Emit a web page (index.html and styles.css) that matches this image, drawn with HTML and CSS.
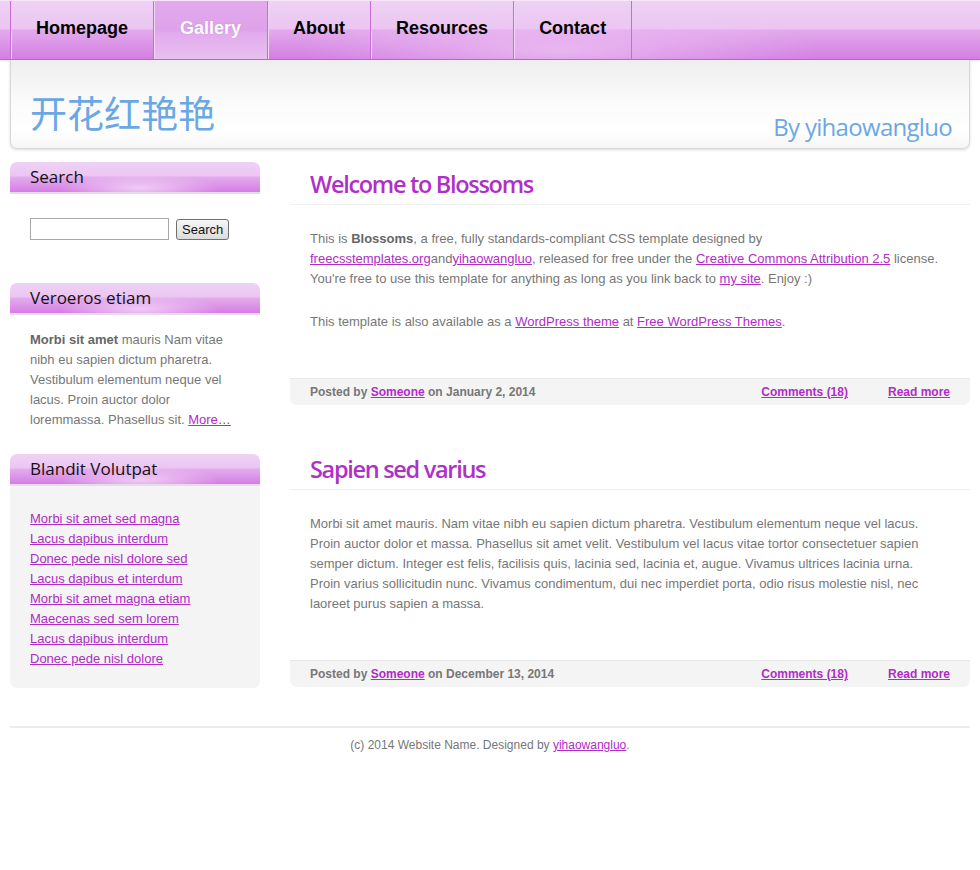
FILE: index.html
```html
<!DOCTYPE html>
<html lang="zh">
<head>
<meta charset="utf-8">
<title>Blossoms</title>
<link rel="stylesheet" href="styles.css">
</head>
<body>
<div class="nav">
  <ul class="menu">
    <li><a href="#">Homepage</a></li>
    <li class="active"><a href="#">Gallery</a></li>
    <li><a href="#">About</a></li>
    <li><a href="#">Resources</a></li>
    <li class="last"><a href="#">Contact</a></li>
  </ul>
</div>
<div class="header">
  <h1 class="logo">开花红艳艳</h1>
  <p class="byline">By yihaowangluo</p>
</div>
<div class="page">
  <div class="sidebar">
    <div class="box box-search">
      <h2 class="box-title">Search</h2>
      <div class="box-body search">
        <input class="search-input" type="text">
        <button class="search-btn" type="button">Search</button>
      </div>
    </div>
    <div class="box">
      <h2 class="box-title">Veroeros etiam</h2>
      <div class="box-body text">
        <strong>Morbi sit amet</strong> mauris Nam vitae nibh eu sapien dictum pharetra. Vestibulum elementum neque vel lacus. Proin auctor dolor loremmassa. Phasellus sit. <a href="#">More…</a>
      </div>
    </div>
    <div class="box">
      <h2 class="box-title">Blandit Volutpat</h2>
      <ul class="box-body links">
        <li><a href="#">Morbi sit amet sed magna</a></li>
        <li><a href="#">Lacus dapibus interdum</a></li>
        <li><a href="#">Donec pede nisl dolore sed</a></li>
        <li><a href="#">Lacus dapibus et interdum</a></li>
        <li><a href="#">Morbi sit amet magna etiam</a></li>
        <li><a href="#">Maecenas sed sem lorem</a></li>
        <li><a href="#">Lacus dapibus interdum</a></li>
        <li><a href="#">Donec pede nisl dolore</a></li>
      </ul>
    </div>
  </div>
  <div class="main">
    <div class="post">
      <h2 class="post-title">Welcome to Blossoms</h2>
      <div class="entry">
        <p>This is <strong>Blossoms</strong>, a free, fully standards-compliant CSS template designed by <a href="#">freecsstemplates.org</a>and<a href="#">yihaowangluo</a>, released for free under the <a href="#">Creative Commons Attribution 2.5</a> license. You're free to use this template for anything as long as you link back to <a href="#">my site</a>. Enjoy :)</p>
        <p>This template is also available as a <a href="#">WordPress theme</a> at <a href="#">Free WordPress Themes</a>.</p>
      </div>
      <div class="meta">
        <span class="posted">Posted by <a href="#">Someone</a> on January 2, 2014</span>
        <span class="meta-links"><a href="#">Comments (18)</a><a href="#">Read more</a></span>
      </div>
    </div>
    <div class="post">
      <h2 class="post-title">Sapien sed varius</h2>
      <div class="entry">
        <p>Morbi sit amet mauris. Nam vitae nibh eu sapien dictum pharetra. Vestibulum elementum neque vel lacus. Proin auctor dolor et massa. Phasellus sit amet velit. Vestibulum vel lacus vitae tortor consectetuer sapien semper dictum. Integer est felis, facilisis quis, lacinia sed, lacinia et, augue. Vivamus ultrices lacinia urna. Proin varius sollicitudin nunc. Vivamus condimentum, dui nec imperdiet porta, odio risus molestie nisl, nec laoreet purus sapien a massa.</p>
      </div>
      <div class="meta">
        <span class="posted">Posted by <a href="#">Someone</a> on December 13, 2014</span>
        <span class="meta-links"><a href="#">Comments (18)</a><a href="#">Read more</a></span>
      </div>
    </div>
  </div>
</div>
<div class="footer">
  <p>(c) 2014 Website Name. Designed by <a href="#">yihaowangluo</a>.</p>
</div>
</body>
</html>
```

FILE: styles.css
```css
html, body {
  margin: 0;
  padding: 0;
  background: #fff;
}
body {
  font-family: "Liberation Sans", Arial, sans-serif;
  font-size: 13px;
  color: #777;
}
a {
  color: #b02cc6;
}

/* nav */
.nav {
  box-sizing: border-box;
  height: 60px;
  border-top: 1px solid #f6e6f8;
  border-bottom: 1px solid #c262d4;
  background:
    radial-gradient(ellipse 260px 40px at 560px 50px, rgba(240, 200, 245, 0.7), rgba(240, 200, 245, 0)),
    linear-gradient(to bottom, #efd2f5 0%, #eac5f1 48%, #e3aaec 50%, #d37ee3 100%);
  box-shadow: 0 1px 2px rgba(0, 0, 0, 0.12);
}
.menu {
  list-style: none;
  margin: 0;
  padding: 0 0 0 10px;
  display: flex;
  height: 100%;
}
.menu li {
  border-left: 1px solid #c96ad9;
  box-shadow: inset 1px 0 0 #f2d6f6;
}
.menu li.last {
  border-right: 1px solid #c96ad9;
}
.menu a {
  display: block;
  height: 58px;
  line-height: 54px;
  padding: 0 25px;
  font-family: "Liberation Sans", Arial, sans-serif;
  font-weight: bold;
  font-size: 18px;
  color: #000;
  text-decoration: none;
}
.menu li.active a {
  padding: 0 26px;
  color: #fff;
  text-shadow: 0 0 1px rgba(120, 40, 140, 0.3);
}
.menu li.active {
  background: linear-gradient(to bottom, #e2a9ec 0%, #dea2ea 50%, #e2aaed 55%, #e9c0f0 100%);
}

/* header */
.header {
  margin: 0 10px;
  height: 89px;
  box-sizing: border-box;
  border: 1px solid #d8d8d8;
  border-top: none;
  border-radius: 0 0 7px 7px;
  background: linear-gradient(to bottom, #eeeeee 0%, #fafafa 45%, #ffffff 80%, #f6f6f6 100%);
  box-shadow: 0 1px 3px rgba(0, 0, 0, 0.15);
  display: flex;
  justify-content: space-between;
  align-items: flex-end;
  padding: 0 17px 5px 19px;
}
.logo {
  margin: 0 0 9px;
  font-family: "Noto Sans CJK SC", "Noto Sans CJK JP", sans-serif;
  font-weight: 400;
  font-size: 37px;
  line-height: 44px;
  color: #6aa8e4;
}
.byline {
  margin: 0;
  font-family: "Open Sans", "DejaVu Sans", sans-serif;
  font-size: 24px;
  line-height: 32px;
  letter-spacing: -0.7px;
  color: #6aa8e4;
}

/* page */
.page {
  display: flex;
  align-items: flex-start;
  padding: 13px 10px 0;
}
.sidebar {
  width: 250px;
  flex: none;
}
.box {
  margin-bottom: 24px;
}
.box:last-child {
  margin-bottom: 0;
}
.box-title {
  margin: 0;
  height: 32px;
  box-sizing: border-box;
  padding-left: 20px;
  font-family: "Open Sans", "DejaVu Sans", sans-serif;
  font-weight: normal;
  font-size: 17px;
  line-height: 29px;
  color: #111;
  border-radius: 7px 7px 0 0;
  border-bottom: 2px solid #e6dcea;
  background:
    radial-gradient(ellipse 80px 14px at 130px 26px, rgba(242, 210, 247, 0.9), rgba(242, 210, 247, 0)),
    linear-gradient(to bottom, #efd2f5 0%, #ebc6f2 45%, #e3aaec 52%, #d57ee4 100%);
}
.box-body {
  margin: 0;
  padding: 0 20px;
}
.search {
  display: flex;
  align-items: center;
  padding-top: 24px;
  padding-bottom: 19px;
  gap: 7px;
}
.search-input {
  width: 139px;
  height: 22px;
  box-sizing: border-box;
  border: 1px solid #a9a9a9;
  margin: 0;
  padding: 0 2px;
  background: #fff;
}
.search-btn {
  height: 21px;
  box-sizing: border-box;
  margin: 0;
  padding: 0 5px;
  font-family: "Liberation Sans", Arial, sans-serif;
  font-size: 13px;
  color: #111;
  border: 1px solid #707070;
  border-radius: 3px;
  background: linear-gradient(to bottom, #f6f6f6, #dcdcdc);
}
.text {
  padding-top: 15px;
  line-height: 20px;
  color: #777;
}
.text strong {
  color: #666;
}
.links {
  list-style: none;
  background: #f4f4f4;
  padding: 23px 20px 19px;
  border-radius: 0 0 7px 7px;
  line-height: 20px;
}

/* main */
.main {
  margin-left: 30px;
  width: 680px;
}
.post {
  margin-bottom: 42px;
}
.post:last-child {
  margin-bottom: 0;
}
.post-title {
  margin: 0;
  padding: 6px 20px 4px;
  height: 43px;
  box-sizing: border-box;
  border-bottom: 1px solid #f0f0f0;
  font-family: "Open Sans", "DejaVu Sans", sans-serif;
  font-weight: 600;
  font-size: 23.5px;
  line-height: 32px;
  letter-spacing: -1.3px;
  color: #b030c6;
}
.entry {
  padding: 24px 30px 23px 20px;
  line-height: 20px;
}
.entry p {
  margin: 0 0 23px;
}
.entry strong {
  color: #666;
}
.meta {
  display: flex;
  justify-content: space-between;
  padding: 0 20px;
  height: 27px;
  box-sizing: border-box;
  line-height: 27px;
  border-top: 1px solid #e8e8e8;
  border-radius: 0 0 7px 7px;
  background: #f4f4f4;
  font-size: 12px;
  font-weight: bold;
  color: #777;
}
.meta-links {
  display: flex;
  gap: 40px;
}

/* footer */
.footer {
  margin: 38px 10px 0;
  border-top: 2px solid #ececec;
  text-align: center;
}
.footer p {
  margin: 0;
  padding-top: 9px;
  font-size: 12px;
  line-height: 16px;
  color: #777;
}
```
